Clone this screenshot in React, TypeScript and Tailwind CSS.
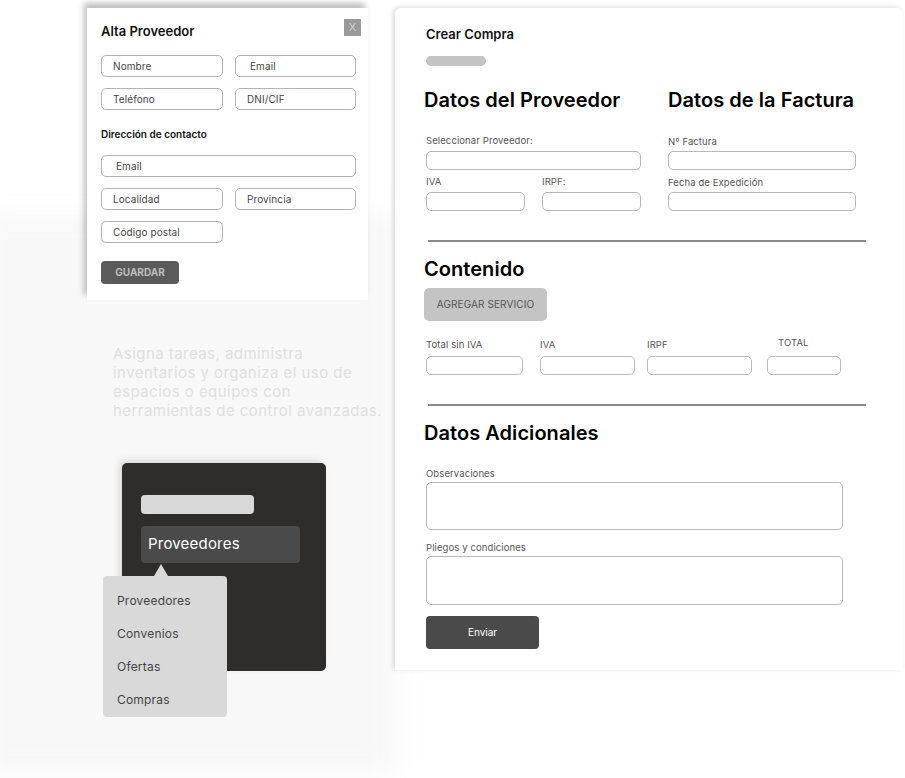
import { ReactNode } from "react";

const font = { fontFamily: "Inter, 'Noto Sans', sans-serif" };

function Field({ children, className = "" }: { children?: ReactNode; className?: string }) {
  return (
    <div
      className={`flex h-[22px] items-center rounded-[5px] border border-[#b4b4b4] bg-white pl-[11px] text-[10px] tracking-[0.1px] text-[#444] ${className}`}
    >
      {children}
    </div>
  );
}

function Input({ className = "" }: { className?: string }) {
  return <div className={`h-[19px] rounded-[5px] border border-[#b9b9b9] bg-white ${className}`} />;
}

function Label({ children, className = "" }: { children: ReactNode; className?: string }) {
  return <div className={`text-[9.5px] leading-[12px] tracking-[0.1px] text-[#555] ${className}`}>{children}</div>;
}

function Heading({ children, className = "" }: { children: ReactNode; className?: string }) {
  return (
    <h2 className={`text-[20px] font-semibold leading-[24px] tracking-[0.05px] text-black ${className}`}>
      {children}
    </h2>
  );
}

function AltaProveedor() {
  return (
    <div className="relative z-10 ml-[87px] h-[292px] w-[281px] bg-white pl-[14px] pr-[7px] pt-[11px] shadow-[-3px_-5px_6px_rgba(0,0,0,0.25)]">
      <div className="flex items-start justify-between">
        <h3 className="mt-[4px] text-[13px] font-semibold leading-[16px] text-[#111]">Alta Proveedor</h3>
        <div className="flex h-[17px] w-[17px] items-center justify-center bg-[#9a9a9a] text-[11px] leading-none text-[#d0d0d0]">
          X
        </div>
      </div>
      <div className="mt-[16px] grid w-[255px] grid-cols-[122px_121px] gap-x-[12px] gap-y-[11px]">
        <Field>Nombre</Field>
        <Field className="pl-[14px]">Email</Field>
        <Field>Teléfono</Field>
        <Field className="pl-[8px]">DNI/CIF</Field>
      </div>
      <div className="mt-[18px] text-[10px] font-semibold leading-[12px] text-[#111]">Dirección de contacto</div>
      <div className="mt-[15px] grid w-[255px] grid-cols-[122px_121px] gap-x-[12px] gap-y-[11px]">
        <Field className="col-span-2 pl-[14px]">Email</Field>
        <Field>Localidad</Field>
        <Field>Provincia</Field>
        <Field>Código postal</Field>
      </div>
      <button className="mt-[18px] flex h-[23px] w-[78px] items-center justify-center rounded-[4px] bg-[#5a5a5a] text-[10px] font-bold text-[#bdbdbd]">
        GUARDAR
      </button>
    </div>
  );
}

function MenuCard() {
  return (
    <div className="relative ml-[122px] mt-[43px] h-[208px] w-[204px] rounded-[5px] bg-[#2e2d2b] pl-[19px] pt-[32px] shadow-[-3px_-3px_6px_rgba(0,0,0,0.12)]">
      <div className="h-[19px] w-[113px] rounded-[4px] bg-[#d9d9d9]" />
      <div className="mt-[12px] flex h-[37px] w-[159px] items-center rounded-[4px] bg-[#4a4a4a] pl-[7px] text-[15px] tracking-[0.2px] text-white">
        Proveedores
      </div>
      <svg className="absolute left-[32px] top-[101px]" width="14" height="12" viewBox="0 0 14 12">
        <polygon points="7,0 14,12 0,12" fill="#d9d9d9" />
      </svg>
      <div className="absolute left-[-19px] top-[113px] h-[141px] w-[124px] rounded-[4px] bg-[#d9d9d9] pt-[8px] text-[12px] tracking-[0.2px] text-[#444]">
        {["Proveedores", "Convenios", "Ofertas", "Compras"].map((item) => (
          <div key={item} className="flex h-[33px] items-center pl-[14px]">
            {item}
          </div>
        ))}
      </div>
    </div>
  );
}

function CrearCompra() {
  return (
    <div className="relative z-10 h-[662px] w-[508px] rounded-tl-[6px] rounded-tr-[6px] bg-white pl-[31px] pt-[18px] shadow-[-2px_-1px_5px_rgba(0,0,0,0.14)]">
      <h1 className="text-[13px] font-semibold leading-[16px] text-[#111]">Crear Compra</h1>
      <div className="mt-[14px] h-[10px] w-[60px] rounded-full bg-[#c4c4c4]" />

      <div className="mt-[22px] flex gap-[27px]">
        <div className="w-[215px]">
          <Heading className="-ml-[2px] whitespace-nowrap">Datos del Proveedor</Heading>
          <Label className="mt-[23px]">Seleccionar Proveedor:</Label>
          <Input className="mt-[4px] w-[215px]" />
          <div className="mt-[6px] flex gap-[17px]">
            <div className="w-[99px]">
              <Label>IVA</Label>
              <Input className="mt-[4px]" />
            </div>
            <div className="w-[99px]">
              <Label>IRPF:</Label>
              <Input className="mt-[4px]" />
            </div>
          </div>
        </div>
        <div className="w-[188px]">
          <Heading className="whitespace-nowrap">Datos de la Factura</Heading>
          <Label className="mt-[24px]">Nº Factura</Label>
          <Input className="mt-[3px]" />
          <Label className="mt-[7px]">Fecha de Expedición</Label>
          <Input className="mt-[3px]" />
        </div>
      </div>

      <div className="ml-[2px] mt-[29px] h-[2px] w-[438px] bg-[#8a8a8a]" />
      <Heading className="-ml-[2px] mt-[15px]">Contenido</Heading>
      <button className="-ml-[2px] mt-[7px] flex h-[33px] w-[123px] items-center justify-center rounded-[5px] bg-[#c4c4c4] text-[10px] tracking-[0.1px] text-[#555]">
        AGREGAR SERVICIO
      </button>
      <div className="mt-[18px] flex">
        <div className="w-[97px]">
          <Label>Total sin IVA</Label>
          <Input className="mt-[5px]" />
        </div>
        <div className="ml-[17px] w-[95px]">
          <Label>IVA</Label>
          <Input className="mt-[5px]" />
        </div>
        <div className="ml-[12px] w-[105px]">
          <Label>IRPF</Label>
          <Input className="mt-[5px]" />
        </div>
        <div className="ml-[15px] w-[74px]">
          <Label className="-mt-[2px] pl-[11px]">TOTAL</Label>
          <Input className="mt-[7px]" />
        </div>
      </div>

      <div className="ml-[2px] mt-[29px] h-[2px] w-[438px] bg-[#8a8a8a]" />
      <Heading className="-ml-[2px] mt-[15px]">Datos Adicionales</Heading>
      <Label className="mt-[23px]">Observaciones</Label>
      <div className="mt-[2px] h-[48px] w-[417px] rounded-[5px] border border-[#b9b9b9]" />
      <Label className="mt-[12px]">Pliegos y condiciones</Label>
      <div className="mt-[2px] h-[49px] w-[417px] rounded-[5px] border border-[#b9b9b9]" />
      <button className="mt-[11px] flex h-[33px] w-[113px] items-center justify-center rounded-[4px] bg-[#4a4a4a] text-[10px] text-white">
        Enviar
      </button>
    </div>
  );
}

export default function App() {
  return (
    <div className="relative flex h-[778px] w-[905px] overflow-hidden bg-white" style={font}>
      {/* soft grey backdrop behind the left column */}
      <div className="pointer-events-none absolute left-[-20px] top-[215px] h-[560px] w-[418px] rounded-br-[12px] bg-[#f8f8f9] blur-[12px]" />

      <div className="relative w-[395px] shrink-0 pt-[8px]">
        <AltaProveedor />
        <p className="ml-[113px] mt-[44px] whitespace-nowrap text-[15px] leading-[19px] tracking-[0.45px] text-[#e0e0e0]">
          Asigna tareas, administra
          <br />
          inventarios y organiza el uso de
          <br />
          espacios o equipos con
          <br />
          herramientas de control avanzadas.
        </p>
        <MenuCard />
      </div>

      <div className="pt-[8px]">
        <CrearCompra />
      </div>
    </div>
  );
}
